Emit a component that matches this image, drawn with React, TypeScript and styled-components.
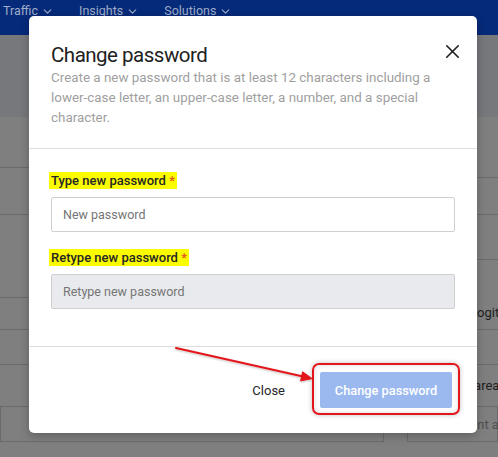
import styled, { createGlobalStyle } from 'styled-components';
import { ChevronDown, X } from 'lucide-react';

const GlobalStyle = createGlobalStyle`
  html, body {
    margin: 0;
    padding: 0;
    background: #7f7f7f;
    font-family: Roboto, "Liberation Sans", Arial, sans-serif;
  }
  * { box-sizing: border-box; }
`;

type RowSpec = {
  h: number;
  text?: string;
  muted?: boolean;
  boxed?: boolean;
  indent?: number;
  bottom?: boolean;
};

const leftRows: RowSpec[] = [
  { h: 51 }, { h: 47 }, { h: 83 }, { h: 32 }, { h: 35 }, { h: 42 }, { h: 35, boxed: true },
];

const rightRows: RowSpec[] = [
  { h: 61 }, { h: 37 }, { h: 45 },
  { h: 70, text: 'Logitech', indent: 63, bottom: true },
  { h: 35 },
  { h: 42, text: 'Target area', indent: 27 },
  { h: 35, text: 'Content and more', muted: true, boxed: true, indent: 35 },
];

export default function App() {
  return (
    <Page>
      <GlobalStyle />
      <NavBar>
        {['Traffic', 'Insights', 'Solutions'].map((item) => (
          <NavItem key={item}>
            {item}
            <ChevronDown size={13} strokeWidth={2} />
          </NavItem>
        ))}
      </NavBar>
      <Band />
      <Columns>
        <LeftColumn>
          {leftRows.map((r, i) => (
            <BgRow key={i} $h={r.h} $boxed={r.boxed} />
          ))}
        </LeftColumn>
        <RightColumn>
          {rightRows.map((r, i) => (
            <BgRow key={i} $h={r.h} $boxed={r.boxed} $indent={r.indent} $bottom={r.bottom}>
              {r.text && <BgText $muted={r.muted}>{r.text}</BgText>}
            </BgRow>
          ))}
        </RightColumn>
      </Columns>

      <Modal>
        <ModalHeader>
          <Title>Change password</Title>
          <Description>
            Create a new password that is at least 12 characters including a lower-case letter, an
            upper-case letter, a number, and a special character.
          </Description>
          <CloseIcon aria-label="Close">
            <X size={23} strokeWidth={1.7} />
          </CloseIcon>
        </ModalHeader>

        <ModalBody>
          <Field>
            <Label>
              <Mark>
                Type new password <Required>*</Required>
              </Mark>
            </Label>
            <Input placeholder="New password" />
          </Field>
          <Field>
            <Label>
              <Mark>
                Retype new password <Required>*</Required>
              </Mark>
            </Label>
            <Input placeholder="Retype new password" disabled />
          </Field>
        </ModalBody>

        <ModalFooter>
          <TextButton>Close</TextButton>
          <PrimaryWrap>
            <PrimaryButton disabled>Change password</PrimaryButton>
            <Ring />
          </PrimaryWrap>
        </ModalFooter>
      </Modal>

      <Arrow width="498" height="457" viewBox="0 0 498 457">
        <defs>
          <filter id="glow" x="-20%" y="-50%" width="140%" height="200%">
            <feDropShadow dx="0" dy="1" stdDeviation="1.2" floodColor="#000" floodOpacity="0.25" />
          </filter>
        </defs>
        <g filter="url(#glow)" fill="#e3161c" stroke="#e3161c">
          <line x1="176" y1="348" x2="303" y2="376.5" strokeWidth="2" strokeLinecap="round" />
          <polygon points="312,378.6 300.6,380.9 302.6,371.8" strokeWidth="1" strokeLinejoin="round" />
        </g>
      </Arrow>
    </Page>
  );
}

const Page = styled.div`
  position: relative;
  width: 498px;
  height: 457px;
  overflow: hidden;
  background: #7f7f7f;
`;

const NavBar = styled.nav`
  display: flex;
  align-items: flex-start;
  gap: 25px;
  height: 35px;
  padding: 3px 0 0 3px;
  background: #062a7a;
`;

const NavItem = styled.span`
  display: inline-flex;
  align-items: center;
  gap: 3px;
  font-size: 12.5px;
  line-height: 16px;
  color: #9fadc8;
`;

const Band = styled.div`
  height: 82px;
  background: #76787b;
`;

const Columns = styled.div`
  display: flex;
  gap: 23px;
`;

const LeftColumn = styled.div`
  display: flex;
  flex-direction: column;
  flex: 0 0 384px;
`;

const RightColumn = styled.div`
  display: flex;
  flex-direction: column;
  flex: 1;
  min-width: 0;
`;

const BgRow = styled.div<{ $h: number; $boxed?: boolean; $indent?: number; $bottom?: boolean }>`
  height: ${(p) => p.$h}px;
  display: flex;
  align-items: ${(p) => (p.$bottom ? 'flex-end' : 'center')};
  padding-left: ${(p) => p.$indent ?? 0}px;
  padding-bottom: ${(p) => (p.$bottom ? 9 : 0)}px;
  border-bottom: 1px solid #6b6b6b;
  ${(p) => (p.$boxed ? 'border-left: 1px solid #6b6b6b; border-right: 1px solid #6b6b6b;' : '')}
`;

const BgText = styled.span<{ $muted?: boolean }>`
  font-size: 13px;
  color: ${(p) => (p.$muted ? '#505050' : '#1e1e1e')};
  white-space: nowrap;
`;

const Modal = styled.div`
  position: absolute;
  left: 29px;
  top: 16px;
  width: 448px;
  height: 417px;
  display: flex;
  flex-direction: column;
  background: #fff;
  border-radius: 5px;
  box-shadow: 0 3px 10px rgba(0, 0, 0, 0.25);
`;

const ModalHeader = styled.div`
  position: relative;
  padding: 26px 40px 20px 22px;
  border-bottom: 1px solid #dedede;
`;

const Title = styled.h2`
  margin: 0;
  font-size: 20.5px;
  font-weight: 400;
  letter-spacing: -0.5px;
  line-height: 26px;
  color: #212121;
`;

const Description = styled.p`
  margin: 0;
  font-size: 13.4px;
  line-height: 20px;
  color: #a0a0a0;
`;

const CloseIcon = styled.button`
  position: absolute;
  top: 24px;
  right: 13px;
  display: flex;
  padding: 0;
  border: 0;
  background: none;
  color: #1f1f1f;
  cursor: pointer;
`;

const ModalBody = styled.div`
  display: flex;
  flex-direction: column;
  gap: 16px;
  padding: 22px 22px 37px;
  border-bottom: 1px solid #dedede;
`;

const Field = styled.div`
  display: flex;
  flex-direction: column;
  gap: 6px;
`;

const Label = styled.label`
  font-size: 13px;
  line-height: 20px;
  font-weight: 500;
  color: #262626;
`;

const Mark = styled.span`
  background: #fcfc00;
  padding: 1px 2px;
  margin-left: -2px;
`;

const Required = styled.span`
  color: #e0561b;
`;

const Input = styled.input`
  height: 35px;
  padding: 0 11px;
  font-family: inherit;
  font-size: 12.5px;
  color: #333;
  background: #fff;
  border: 1px solid #cfcfcf;
  border-radius: 2px;
  outline: none;

  &::placeholder {
    color: #757575;
  }

  &:disabled {
    background: #e8eaed;
  }
`;

const ModalFooter = styled.div`
  flex: 1;
  display: flex;
  align-items: center;
  justify-content: flex-end;
  gap: 23px;
  padding: 0 25px 0 0;
`;

const TextButton = styled.button`
  padding: 8px 12px;
  border: 0;
  background: none;
  font-family: inherit;
  font-size: 13px;
  color: #262626;
  cursor: pointer;
`;

const PrimaryWrap = styled.span`
  position: relative;
  display: inline-flex;
`;

const PrimaryButton = styled.button`
  width: 132px;
  height: 36px;
  border: 0;
  border-radius: 2px;
  background: #9bb9ef;
  color: #fff;
  font-family: inherit;
  font-size: 12.8px;
  font-weight: 500;
`;

const Ring = styled.span`
  position: absolute;
  inset: -9px -8px -7px -8px;
  border: 2px solid #e3161c;
  border-radius: 7px;
  box-shadow: 0 0 5px rgba(0, 0, 0, 0.25), inset 0 0 5px rgba(0, 0, 0, 0.15);
  pointer-events: none;
`;

const Arrow = styled.svg`
  position: absolute;
  left: 0;
  top: 0;
  pointer-events: none;
`;
